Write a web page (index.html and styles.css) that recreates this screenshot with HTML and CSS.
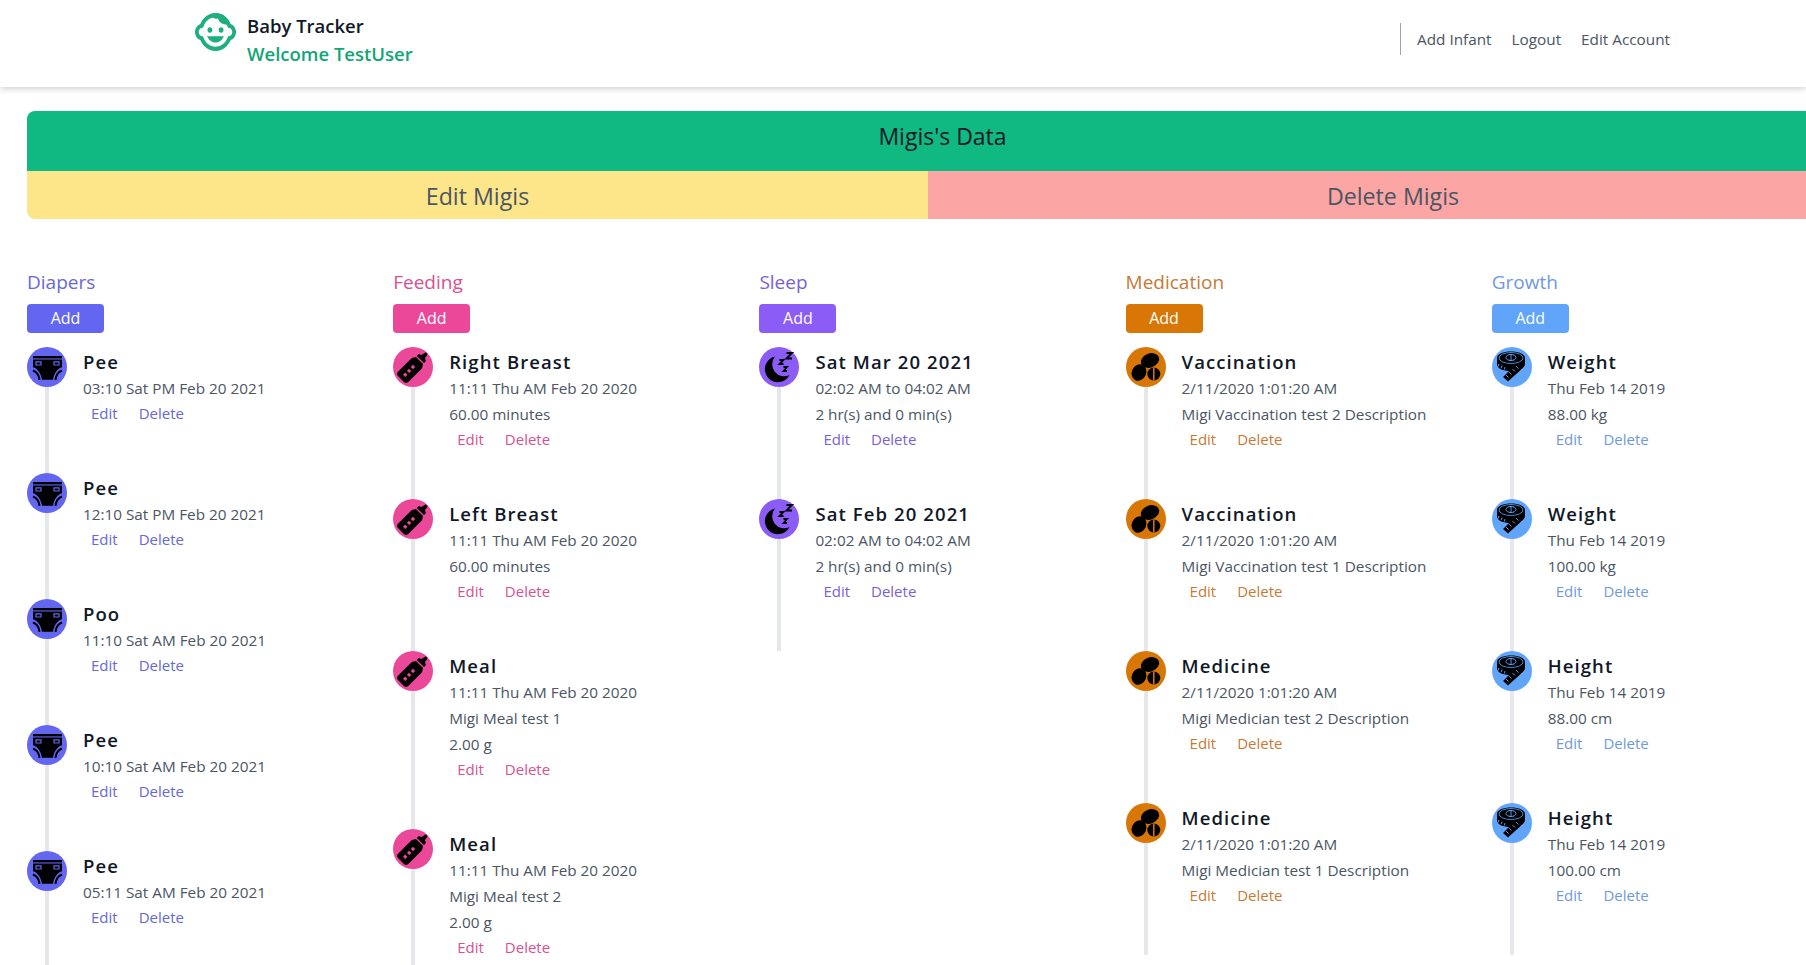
FILE: index.html
```html
<!DOCTYPE html>
<html lang="en">
  <head>
    <meta charset="UTF-8" />
    <meta name="viewport" content="width=device-width, initial-scale=1.0" />
    <title>Baby Tracker</title>
    <link rel="stylesheet" href="styles.css">
  </head>
  <body>
    <svg class="defs" width="0" height="0">
      <symbol id="i-diaper" viewBox="0 0 40 40">
        <path d="M6 9h29v2.400H6z" fill="#000" />
        <path d="M6 12.600h29v7.600c-4.400 1.200-8 6-9 12.600H15c-1-6.600-4.600-11.400-9-12.600z" fill="#000" />
        <path d="M9 14.800h5v3.200H9zM27 14.800h5v3.200h-5z" fill="none" style="stroke: var(--c)" stroke-width="1.200" />
        <path d="M6 23.500c3.500 1.200 6 4.700 6.500 9.300M35 23.500c-3.500 1.200-6 4.700-6.500 9.300" fill="none" stroke="#000" stroke-width="2" />
      </symbol>
      <symbol id="i-bottle" viewBox="0 0 40 40">
        <g transform="rotate(45 20 20)">
          <path d="M18.400 1.500c0-1.300 3.200-1.300 3.200 0l.6 4c1.400.3 2.400.8 2.800 1.600v2.400H14.900V7.100c.4-.8 1.400-1.300 2.800-1.600z" fill="#000" />
          <path d="M15 10.800h10c.4 1.300 1.800 2 2.200 4V34c0 2-1.200 3-3 3h-8.400c-1.800 0-3-1-3-3V14.800c.4-2 1.800-2.700 2.200-4z" fill="#000" />
          <path d="M18.400 18.500h3.200v3h-3.200zM18.400 24h3.200v3h-3.200zM18.400 29.500h3.200v3h-3.200z" style="fill: var(--c)" />
        </g>
      </symbol>
      <symbol id="i-moon" viewBox="0 0 40 40">
        <path d="M16 9.500A13 13 0 1 0 30.500 28 12 12 0 0 1 16 9.500z" fill="#000" />
        <path d="M27.500 6h5.500l-5.500 5.500h5.500M20.500 13h4l-4 4h4M24.500 20h3.500l-3.500 4h3.500" fill="none" stroke="#000" stroke-width="1.800" />
      </symbol>
      <symbol id="i-pills" viewBox="0 0 40 40">
        <ellipse cx="24" cy="13.500" rx="9.500" ry="7" transform="rotate(-22 24 13.500)" fill="#000" />
        <ellipse cx="13" cy="25.500" rx="7.200" ry="8.500" transform="rotate(25 13 25.500)" fill="#000" />
        <circle cx="27.800" cy="27" r="6.500" fill="#000" />
        <path d="M27.800 20.500v13" style="stroke: var(--c)" stroke-width="1.500" />
      </symbol>
      <symbol id="i-tape" viewBox="0 0 40 40">
        <path d="M5 11c0-4 6.300-6.500 14-6.500S33 7 33 11v6c0 1.500-.8 2.800-2.200 4L16 34.500 11 30l6-6c-7-.3-12-3-12-7z" fill="#000" />
        <ellipse cx="19" cy="11" rx="12" ry="5.500" fill="none" style="stroke: var(--c)" stroke-width=".8" />
        <ellipse cx="19" cy="10.500" rx="5" ry="3" fill="none" style="stroke: var(--c)" stroke-width="1" />
        <path d="M19 7.500v6M7 17l-.8 2.500M10 18.500l-.8 2.500M13 20l-.6 2.500M17 25l2.500 2.500M20.500 22l2.500 2.500M24 19l2.500 2.500M14 28l2.500 2.500" fill="none" style="stroke: var(--c)" stroke-width=".9" />
      </symbol>
    </svg>

    <header class="topbar">
      <div class="brand">
        <svg class="logo" viewBox="1 3 22 18" preserveAspectRatio="none">
          <path d="M22.940 12.660c.04-.21.06-.43.06-.66s-.02-.45-.06-.66c-.25-1.510-1.360-2.740-2.810-3.170-.53-1.120-1.280-2.100-2.190-2.910C16.360 3.850 14.280 3 12 3s-4.360.85-5.940 2.260c-.92.81-1.670 1.800-2.190 2.910-1.450.43-2.560 1.650-2.810 3.170-.04.21-.06.43-.06.66s.02.45.06.66c.25 1.510 1.360 2.740 2.810 3.170.52 1.110 1.270 2.090 2.170 2.890C7.620 20.140 9.710 21 12 21s4.380-.86 5.970-2.280c.9-.8 1.650-1.790 2.170-2.890 1.440-.43 2.550-1.650 2.800-3.170zM19 14c-.1 0-.19-.02-.29-.03-.2.67-.49 1.290-.86 1.860C16.600 17.740 14.450 19 12 19s-4.600-1.260-5.850-3.170c-.37-.57-.66-1.190-.86-1.860-.1.01-.19.03-.29.03-1.100 0-2-.9-2-2s.9-2 2-2c.1 0 .19.02.29.03.2-.67.49-1.290.86-1.860C7.400 6.260 9.550 5 12 5s4.600 1.260 5.850 3.170c.37.57.66 1.190.86 1.860.1-.01.19-.03.29-.03 1.100 0 2 .9 2 2s-.9 2-2 2zM7.500 14c.76 1.770 2.490 3 4.500 3s3.740-1.230 4.500-3h-9z" />
          <path d="M9.500 4c2-1.200 6.500-1.200 8.500 1.500 1 1.200 1.300 2.300 1 3-2.500.2-5-.6-5.700-3-.8.500-2.500.4-3.800-1.500z" />
          <circle cx="9" cy="11" r="1.300" />
          <circle cx="15" cy="11" r="1.300" />
        </svg>
        <div class="brand-text">
          <div class="brand-name">Baby Tracker</div>
          <div class="brand-welcome">Welcome TestUser</div>
        </div>
      </div>
      <nav class="nav">
        <a href="#">Add Infant</a>
        <a href="#">Logout</a>
        <a href="#">Edit Account</a>
      </nav>
    </header>

    <main class="main">
      <div class="infant-title">Migis's Data</div>
      <div class="infant-actions">
        <a class="btn-edit" href="#">Edit Migis</a>
        <a class="btn-delete" href="#">Delete Migis</a>
      </div>

      <div class="columns">
        <section class="col diapers">
          <h2>Diapers</h2>
          <a class="add" href="#">Add</a>
          <div class="item">
            <div class="rail"><span class="dot"><svg><use href="#i-diaper" /></svg></span><span class="line"></span></div>
            <div class="info"><h3>Pee</h3><p>03:10 Sat PM Feb 20 2021</p><div class="links"><a href="#">Edit</a><a href="#">Delete</a></div></div>
          </div>
          <div class="item">
            <div class="rail"><span class="dot"><svg><use href="#i-diaper" /></svg></span><span class="line"></span></div>
            <div class="info"><h3>Pee</h3><p>12:10 Sat PM Feb 20 2021</p><div class="links"><a href="#">Edit</a><a href="#">Delete</a></div></div>
          </div>
          <div class="item">
            <div class="rail"><span class="dot"><svg><use href="#i-diaper" /></svg></span><span class="line"></span></div>
            <div class="info"><h3>Poo</h3><p>11:10 Sat AM Feb 20 2021</p><div class="links"><a href="#">Edit</a><a href="#">Delete</a></div></div>
          </div>
          <div class="item">
            <div class="rail"><span class="dot"><svg><use href="#i-diaper" /></svg></span><span class="line"></span></div>
            <div class="info"><h3>Pee</h3><p>10:10 Sat AM Feb 20 2021</p><div class="links"><a href="#">Edit</a><a href="#">Delete</a></div></div>
          </div>
          <div class="item">
            <div class="rail"><span class="dot"><svg><use href="#i-diaper" /></svg></span><span class="line"></span></div>
            <div class="info"><h3>Pee</h3><p>05:11 Sat AM Feb 20 2021</p><div class="links"><a href="#">Edit</a><a href="#">Delete</a></div></div>
          </div>
        </section>

        <section class="col feeding">
          <h2>Feeding</h2>
          <a class="add" href="#">Add</a>
          <div class="item">
            <div class="rail"><span class="dot"><svg><use href="#i-bottle" /></svg></span><span class="line"></span></div>
            <div class="info"><h3>Right Breast</h3><p>11:11 Thu AM Feb 20 2020</p><p>60.00 minutes</p><div class="links"><a href="#">Edit</a><a href="#">Delete</a></div></div>
          </div>
          <div class="item">
            <div class="rail"><span class="dot"><svg><use href="#i-bottle" /></svg></span><span class="line"></span></div>
            <div class="info"><h3>Left Breast</h3><p>11:11 Thu AM Feb 20 2020</p><p>60.00 minutes</p><div class="links"><a href="#">Edit</a><a href="#">Delete</a></div></div>
          </div>
          <div class="item">
            <div class="rail"><span class="dot"><svg><use href="#i-bottle" /></svg></span><span class="line"></span></div>
            <div class="info"><h3>Meal</h3><p>11:11 Thu AM Feb 20 2020</p><p>Migi Meal test 1</p><p>2.00 g</p><div class="links"><a href="#">Edit</a><a href="#">Delete</a></div></div>
          </div>
          <div class="item">
            <div class="rail"><span class="dot"><svg><use href="#i-bottle" /></svg></span><span class="line"></span></div>
            <div class="info"><h3>Meal</h3><p>11:11 Thu AM Feb 20 2020</p><p>Migi Meal test 2</p><p>2.00 g</p><div class="links"><a href="#">Edit</a><a href="#">Delete</a></div></div>
          </div>
        </section>

        <section class="col sleep">
          <h2>Sleep</h2>
          <a class="add" href="#">Add</a>
          <div class="item">
            <div class="rail"><span class="dot"><svg><use href="#i-moon" /></svg></span><span class="line"></span></div>
            <div class="info"><h3>Sat Mar 20 2021</h3><p>02:02 AM to 04:02 AM</p><p>2 hr(s) and 0 min(s)</p><div class="links"><a href="#">Edit</a><a href="#">Delete</a></div></div>
          </div>
          <div class="item">
            <div class="rail"><span class="dot"><svg><use href="#i-moon" /></svg></span><span class="line"></span></div>
            <div class="info"><h3>Sat Feb 20 2021</h3><p>02:02 AM to 04:02 AM</p><p>2 hr(s) and 0 min(s)</p><div class="links"><a href="#">Edit</a><a href="#">Delete</a></div></div>
          </div>
        </section>

        <section class="col medication">
          <h2>Medication</h2>
          <a class="add" href="#">Add</a>
          <div class="item">
            <div class="rail"><span class="dot"><svg><use href="#i-pills" /></svg></span><span class="line"></span></div>
            <div class="info"><h3>Vaccination</h3><p>2/11/2020 1:01:20 AM</p><p>Migi Vaccination test 2 Description</p><div class="links"><a href="#">Edit</a><a href="#">Delete</a></div></div>
          </div>
          <div class="item">
            <div class="rail"><span class="dot"><svg><use href="#i-pills" /></svg></span><span class="line"></span></div>
            <div class="info"><h3>Vaccination</h3><p>2/11/2020 1:01:20 AM</p><p>Migi Vaccination test 1 Description</p><div class="links"><a href="#">Edit</a><a href="#">Delete</a></div></div>
          </div>
          <div class="item">
            <div class="rail"><span class="dot"><svg><use href="#i-pills" /></svg></span><span class="line"></span></div>
            <div class="info"><h3>Medicine</h3><p>2/11/2020 1:01:20 AM</p><p>Migi Medician test 2 Description</p><div class="links"><a href="#">Edit</a><a href="#">Delete</a></div></div>
          </div>
          <div class="item">
            <div class="rail"><span class="dot"><svg><use href="#i-pills" /></svg></span><span class="line"></span></div>
            <div class="info"><h3>Medicine</h3><p>2/11/2020 1:01:20 AM</p><p>Migi Medician test 1 Description</p><div class="links"><a href="#">Edit</a><a href="#">Delete</a></div></div>
          </div>
        </section>

        <section class="col growth">
          <h2>Growth</h2>
          <a class="add" href="#">Add</a>
          <div class="item">
            <div class="rail"><span class="dot"><svg><use href="#i-tape" /></svg></span><span class="line"></span></div>
            <div class="info"><h3>Weight</h3><p>Thu Feb 14 2019</p><p>88.00 kg</p><div class="links"><a href="#">Edit</a><a href="#">Delete</a></div></div>
          </div>
          <div class="item">
            <div class="rail"><span class="dot"><svg><use href="#i-tape" /></svg></span><span class="line"></span></div>
            <div class="info"><h3>Weight</h3><p>Thu Feb 14 2019</p><p>100.00 kg</p><div class="links"><a href="#">Edit</a><a href="#">Delete</a></div></div>
          </div>
          <div class="item">
            <div class="rail"><span class="dot"><svg><use href="#i-tape" /></svg></span><span class="line"></span></div>
            <div class="info"><h3>Height</h3><p>Thu Feb 14 2019</p><p>88.00 cm</p><div class="links"><a href="#">Edit</a><a href="#">Delete</a></div></div>
          </div>
          <div class="item">
            <div class="rail"><span class="dot"><svg><use href="#i-tape" /></svg></span><span class="line"></span></div>
            <div class="info"><h3>Height</h3><p>Thu Feb 14 2019</p><p>100.00 cm</p><div class="links"><a href="#">Edit</a><a href="#">Delete</a></div></div>
          </div>
        </section>
      </div>
    </main>
  </body>
</html>
```

FILE: styles.css
```css
html {
  overflow: hidden;
  height: 100%;
}
body {
  margin: 0;
  height: 100%;
  overflow: hidden;
  font-family: "Open Sans", "Noto Sans", sans-serif;
  font-size: 15px;
  color: #4b5563;
  background-color: #fff;
}
a {
  color: inherit;
  text-decoration: none;
}
.defs {
  display: block;
  height: 0;
}

/* top bar */
.topbar {
  display: flex;
  align-items: flex-start;
  height: 87px;
  box-sizing: border-box;
  padding: 12px 136px 0 195px;
  box-shadow: 0 2px 6px rgba(0, 0, 0, 0.18);
}
.brand {
  display: flex;
  align-items: flex-start;
  gap: 11px;
}
.logo {
  width: 41px;
  height: 38px;
  margin-top: 1px;
  fill: #1fae7e;
}
.brand-text {
  font-size: 18.500px;
  line-height: 28px;
  font-weight: 600;
}
.brand-name {
  color: #111827;
}
.brand-welcome {
  color: #12a577;
}
.nav {
  display: flex;
  gap: 20px;
  margin-left: auto;
  margin-top: 11px;
  padding-left: 16px;
  border-left: 1px solid #9ca3af;
  height: 32px;
  line-height: 32px;
  font-size: 15.300px;
}

/* infant banner */
.main {
  width: 1831px;
  margin: 24px 0 0 27px;
}
.infant-title {
  height: 60px;
  line-height: 50px;
  text-align: center;
  font-size: 23px;
  color: #111827;
  background-color: #10b981;
  border-radius: 8px 0 0 0;
}
.infant-actions {
  display: flex;
  height: 48px;
  line-height: 50px;
  font-size: 23.200px;
  text-align: center;
  color: #4b5563;
}
.btn-edit {
  width: 901px;
  background-color: #fde68a;
  border-radius: 0 0 0 8px;
}
.btn-delete {
  flex: 1;
  background-color: #fca5a5;
}

/* data columns */
.columns {
  display: flex;
  margin-top: 48px;
}
.col {
  width: 20%;
}
.col h2 {
  margin: 0 0 7px;
  font-size: 19px;
  line-height: 30px;
  font-weight: 400;
  color: var(--t);
}
.add {
  display: block;
  width: 77px;
  height: 29px;
  margin-bottom: 14px;
  line-height: 29px;
  font-size: 16px;
  text-align: center;
  color: #fff;
  background-color: var(--c);
  border-radius: 4px;
}
.diapers {
  --c: #6366f1;
  --t: #6769d6;
}
.feeding {
  --c: #ec4899;
  --t: #d9518f;
}
.sleep {
  --c: #8b5cf6;
  --t: #7c5fd6;
}
.medication {
  --c: #d97706;
  --t: #c77a35;
}
.growth {
  --c: #60a5fa;
  --t: #6f99e3;
}
.item {
  display: flex;
  gap: 16px;
}
.rail {
  display: flex;
  flex-direction: column;
  align-items: center;
  width: 40px;
  flex-shrink: 0;
}
.dot {
  display: block;
  width: 40px;
  height: 40px;
  border-radius: 50%;
  background-color: var(--c);
}
.dot svg {
  display: block;
  width: 40px;
  height: 40px;
}
.line {
  flex: 1;
  width: 4px;
  background-color: #e5e7eb;
}
.info {
  padding-bottom: 48px;
}
.info h3 {
  margin: 0;
  font-size: 18.500px;
  line-height: 30px;
  height: 28px;
  font-weight: 600;
  letter-spacing: 1.100px;
  color: #111827;
}
.info p {
  margin: 0;
  font-size: 15.300px;
  line-height: 26px;
}
.links {
  display: flex;
  gap: 5px;
  line-height: 24px;
  color: var(--t);
}
.links a {
  padding: 0 8px;
}
```
